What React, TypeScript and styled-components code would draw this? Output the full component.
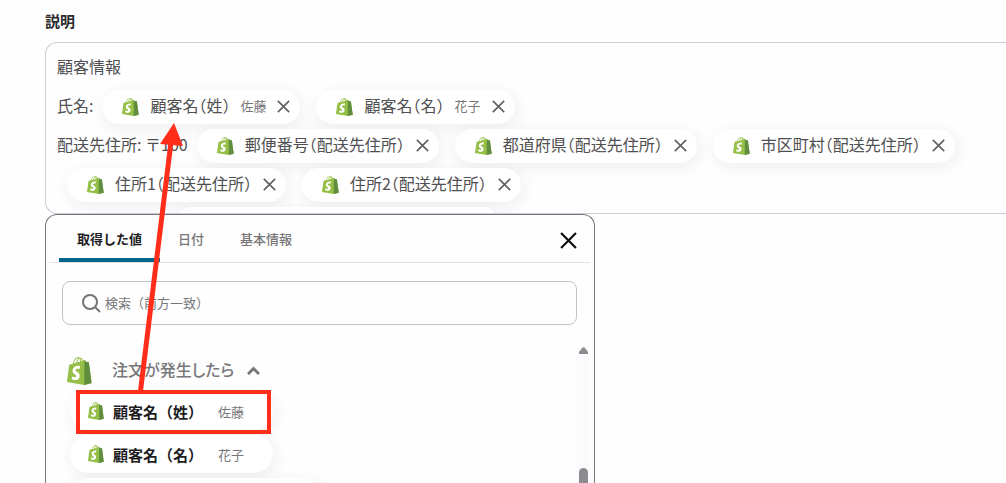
import React from "react";
import styled, { createGlobalStyle } from "styled-components";

const GlobalStyle = createGlobalStyle`
  * { box-sizing: border-box; }
  body {
    margin: 0;
    background: #fefefe;
    color: #505052;
    font-family: "Noto Sans CJK JP", "Noto Sans", sans-serif;
    font-size: 16px;
  }
  button { font-family: inherit; }
`;

const Page = styled.main`
  position: relative;
  display: flex;
  flex-direction: column;
  height: 100vh;
  overflow: hidden;
  padding: 8px 0 0 45px;
`;

const FieldLabel = styled.h2`
  margin: 0 0 8px;
  font-size: 15px;
  line-height: 26px;
  font-weight: 700;
  color: #2b2b2d;
`;

const Field = styled.section`
  flex: none;
  height: 172px;
  overflow: hidden;
  padding: 5px 0 0 11px;
  border: 1px solid #cbcdda;
  border-right: 0;
  border-radius: 12px 0 0 12px;
`;

const Line = styled.div<{ $inset?: number }>`
  display: flex;
  align-items: center;
  gap: 16px;
  height: 39px;
  padding-left: ${(p) => p.$inset ?? 0}px;
  white-space: pre;
`;

const LineText = styled.span<{ $gap?: number }>`
  margin-right: ${(p) => p.$gap ?? 0}px;
  padding-bottom: 4px;
  font-feature-settings: "halt";
`;

const Chip = styled.span<{ $ghost?: boolean }>`
  display: flex;
  align-items: center;
  flex: none;
  width: ${(p) => (p.$ghost ? "324px" : "auto")};
  height: 34px;
  padding: 0 10px 0 20px;
  border-radius: 17px;
  background: #fff;
  box-shadow: 2px 4px 16px rgba(70, 40, 80, 0.08);
`;

const ChipText = styled.span`
  margin-left: 11px;
  padding-bottom: 4px;
  font-feature-settings: "halt";
`;

const ChipSample = styled.span`
  margin-left: 10px;
  padding-bottom: 2px;
  font-size: 13px;
  color: #77777a;
`;

const IconButton = styled.button<{ $gap?: number; $strong?: boolean }>`
  display: flex;
  margin: 0 0 0 ${(p) => p.$gap ?? 0}px;
  padding: ${(p) => (p.$strong ? "4px 0 0" : "0")};
  border: 0;
  background: none;
  color: ${(p) => (p.$strong ? "#0c0c0d" : "#606063")};
  cursor: pointer;
`;

const Panel = styled.section`
  display: flex;
  flex-direction: column;
  flex: 1;
  width: 550px;
  max-width: 100%;
  min-height: 0;
  overflow: hidden;
  padding: 0 4px 0 3px;
  border: 1px solid #77777a;
  border-bottom: 0;
  border-radius: 12px 12px 0 0;
  background: #fefefe;
`;

const TabBar = styled.div`
  display: flex;
  align-items: center;
  flex: none;
  height: 48px;
  padding: 0 13px 0 10px;
  border-bottom: 1px solid #e3e3e6;
`;

const Tab = styled.button<{ $active?: boolean }>`
  height: 47px;
  padding: 3px 18px 0;
  border: 0;
  border-bottom: 4px solid ${(p) => (p.$active ? "#04648a" : "transparent")};
  border-radius: 4px 4px 0 0;
  background: none;
  font-size: 13px;
  font-weight: ${(p) => (p.$active ? 700 : 500)};
  color: ${(p) => (p.$active ? "#1d1d1f" : "#77777a")};
  cursor: pointer;
`;

const Spacer = styled.span`
  flex: 1;
`;

const SearchBox = styled.label`
  display: flex;
  align-items: center;
  flex: none;
  height: 44px;
  margin: 18px 13px 0;
  padding: 0 19px;
  border: 1px solid #c4c4c8;
  border-radius: 8px;
  color: #747477;
`;

const SearchInput = styled.input`
  flex: 1;
  min-width: 0;
  margin-left: 4px;
  padding: 0 0 2px;
  border: 0;
  outline: 0;
  background: none;
  font-family: inherit;
  font-size: 13px;
  &::placeholder { color: #77777a; opacity: 1; }
`;

const Results = styled.div`
  display: flex;
  flex: 1;
  min-height: 0;
  margin-top: 20px;
`;

const ResultList = styled.div`
  flex: 1;
  overflow: hidden;
  padding: 4px 0 0 18px;
`;

const GroupHeader = styled.button`
  display: flex;
  align-items: center;
  height: 43px;
  padding: 0;
  border: 0;
  background: none;
  font-size: 16px;
  font-weight: 500;
  font-feature-settings: "palt";
  color: #77777a;
  cursor: pointer;
`;

const GroupTitle = styled.span`
  margin: 0 13px 0 20px;
  padding-bottom: 3px;
`;

const Option = styled.button<{ $wide?: boolean }>`
  display: flex;
  align-items: center;
  width: ${(p) => (p.$wide ? "250px" : "203px")};
  height: 38px;
  margin: 0 0 5px 3px;
  padding: 0 0 0 18px;
  border: 0;
  border-radius: 19px;
  background: #fff;
  box-shadow: 2px 4px 16px rgba(70, 40, 80, 0.08);
  cursor: pointer;
`;

const OptionName = styled.span`
  margin-left: 9px;
  font-size: 15px;
  font-weight: 700;
  color: #1d1d1f;
`;

const OptionSample = styled.span`
  margin-left: 15px;
  font-size: 13px;
  color: #77777a;
`;

const ScrollTrack = styled.div`
  display: flex;
  flex-direction: column;
  align-items: center;
  width: 13px;
  padding-top: 2px;
  background: #fcfbfd;
`;

const ScrollArrow = styled.svg`
  flex: none;
`;

const ScrollThumb = styled.span`
  flex: none;
  width: 9px;
  height: 60px;
  margin-top: 114px;
  border-radius: 5px;
  background: #8d8b90;
`;

const Annotation = styled.svg`
  position: absolute;
  top: 0;
  left: 0;
  pointer-events: none;
`;

const Bag = ({ width, height }: { width: number; height: number }) => (
  <svg width={width} height={height} viewBox="0 0 109.5 124.5" preserveAspectRatio="none" aria-hidden="true">
    <path
      fill="#95BF47"
      d="M95.9 23.9c-.1-.6-.6-1-1.1-1s-9.300-.2-9.300-.2-7.400-7.200-8.100-7.900c-.7-.7-2.200-.5-2.700-.3 0 0-1.400.4-3.700 1.100-.4-1.300-1-2.800-1.800-4.400-2.600-5-6.500-7.700-11.100-7.700-.3 0-.6 0-1 .1-.1-.2-.3-.3-.4-.5-2-2.200-4.600-3.200-7.700-3.100-6 .2-12 4.500-16.800 12.200-3.400 5.400-6 12.200-6.800 17.500-6.900 2.100-11.700 3.600-11.800 3.700-3.500 1.100-3.600 1.200-4 4.500C9.100 40.400 0 111.200 0 111.200l75.600 13.100 32.800-8.200S96 24.500 95.900 23.900zM67.200 16.800l-5.900 1.800c0-2.900-.4-7-1.800-10.500 4.500.8 6.700 5.900 7.700 8.700zM57.200 19.900c-3.900 1.200-8.200 2.500-12.500 3.900 1.200-4.700 3.500-9.300 6.400-12.300 1.100-1.100 2.600-2.400 4.300-3.200 1.700 3.500 2 8.400 1.800 11.600zM49.100 4.200c1.400 0 2.600.3 3.600.9-1.600.8-3.200 2.100-4.700 3.600-3.800 4.100-6.700 10.500-7.900 16.600-3.600 1.100-7.200 2.200-10.500 3.200 2.100-9.500 10.200-24 19.500-24.300z"
    />
    <path
      fill="#5E8E3E"
      d="M94.800 22.900c-.5 0-9.300-.2-9.300-.2s-7.400-7.200-8.100-7.900c-.3-.3-.6-.4-1-.5l-.8 110 32.800-8.200S96 24.500 95.900 23.900c-.1-.6-.6-1-1.100-1z"
    />
    <path
      fill="#fff"
      d="M58 39.900l-3.800 14.400s-4.300-2-9.400-1.600c-7.500.5-7.500 5.200-7.500 6.400.4 6.400 17.300 7.800 18.300 22.900.7 11.900-6.300 20-16.400 20.600-12.200.8-18.900-6.400-18.900-6.400l2.600-11s6.700 5.100 12.100 4.700c3.500-.2 4.800-3.100 4.700-5.100-.5-8.400-14.300-7.900-15.200-21.700-.8-11.600 6.900-23.400 23.700-24.400 6.500-.4 9.800 1.200 9.800 1.200z"
    />
  </svg>
);

const Cross = ({ size, weight }: { size: number; weight: number }) => (
  <svg width={size} height={size} viewBox="0 0 16 16" fill="none" stroke="currentColor" strokeWidth={weight} aria-hidden="true">
    <path d="M1 1l14 14M15 1L1 15" />
  </svg>
);

const Token = ({ name, sample }: { name: string; sample?: string }) => (
  <Chip>
    <Bag width={17} height={18} />
    <ChipText>{name}</ChipText>
    {sample && <ChipSample>{sample}</ChipSample>}
    <IconButton type="button" aria-label={`${name}を削除`} $gap={11}>
      <Cross size={13} weight={2} />
    </IconButton>
  </Chip>
);

const options = [
  { name: "顧客名（姓）", sample: "佐藤" },
  { name: "顧客名（名）", sample: "花子" },
];

export default function App() {
  return (
    <>
      <GlobalStyle />
      <Page>
        <FieldLabel id="description">説明</FieldLabel>
        <Field aria-labelledby="description">
          <Line>
            <LineText>顧客情報</LineText>
          </Line>
          <Line>
            <LineText $gap={-7}>氏名:</LineText>
            <Token name="顧客名（姓）" sample="佐藤" />
            <Token name="顧客名（名）" sample="花子" />
          </Line>
          <Line>
            <LineText $gap={-7}>配送先住所: 〒100</LineText>
            <Token name="郵便番号（配送先住所）" />
            <Token name="都道府県（配送先住所）" />
            <Token name="市区町村（配送先住所）" />
          </Line>
          <Line $inset={10}>
            <Token name="住所1（配送先住所）" />
            <Token name="住所2（配送先住所）" />
          </Line>
          <Line $inset={118}>
            <Chip $ghost />
          </Line>
        </Field>

        <Panel>
          <TabBar>
            <Tab type="button" $active>取得した値</Tab>
            <Tab type="button">日付</Tab>
            <Tab type="button">基本情報</Tab>
            <Spacer />
            <IconButton type="button" aria-label="閉じる" $strong>
              <Cross size={17} weight={2} />
            </IconButton>
          </TabBar>
          <SearchBox>
            <svg width="19" height="19" viewBox="0 0 19 19" fill="none" stroke="currentColor" strokeWidth="2" aria-hidden="true">
              <circle cx="8" cy="8" r="7" />
              <path d="M13 13l5 5" />
            </svg>
            <SearchInput type="text" aria-label="検索" placeholder="検索（前方一致）" />
          </SearchBox>
          <Results>
            <ResultList>
              <GroupHeader type="button" aria-expanded="true">
                <Bag width={25} height={28} />
                <GroupTitle>注文が発生したら</GroupTitle>
                <svg width="13" height="9" viewBox="0 0 13 9" fill="none" stroke="currentColor" strokeWidth="3" aria-hidden="true">
                  <path d="M1 8l5.500-5.500L12 8" />
                </svg>
              </GroupHeader>
              {options.map((option) => (
                <Option type="button" key={option.name}>
                  <Bag width={16} height={18} />
                  <OptionName>{option.name}</OptionName>
                  <OptionSample>{option.sample}</OptionSample>
                </Option>
              ))}
              <Option type="button" $wide aria-label="次の項目" />
            </ResultList>
            <ScrollTrack>
              <ScrollArrow width="9" height="7" viewBox="0 0 9 7" aria-hidden="true">
                <path d="M3.500 .5h2L9 5v2H0V5z" fill="#8d8b90" />
              </ScrollArrow>
              <ScrollThumb />
            </ScrollTrack>
          </Results>
        </Panel>

        <Annotation width="300" height="440" viewBox="0 0 300 440" aria-hidden="true">
          <rect x="78" y="392" width="191" height="40" fill="none" stroke="#ff2d1a" strokeWidth="4" />
          <path d="M140.500 391L171 142" stroke="#ff2d1a" strokeWidth="5" />
          <path d="M174 123L160 144L183 146z" fill="#ff2d1a" />
        </Annotation>
      </Page>
    </>
  );
}
